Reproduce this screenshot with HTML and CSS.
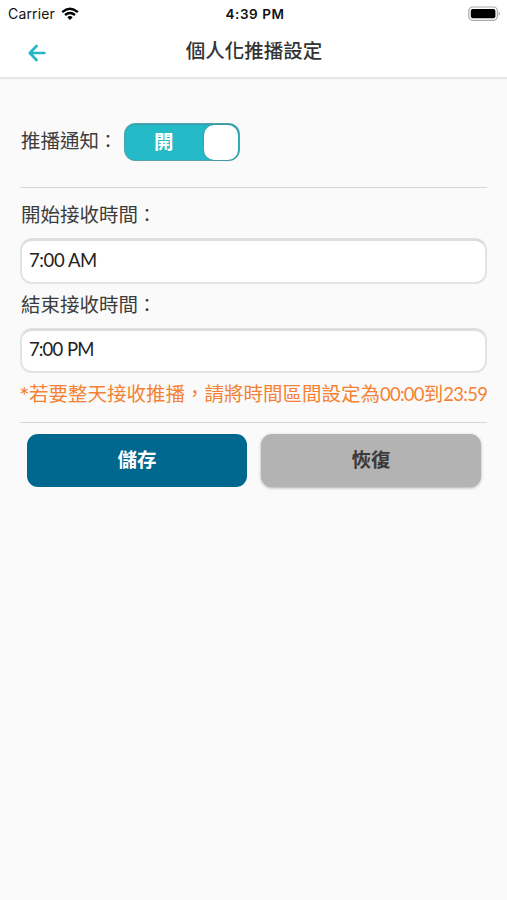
FILE: index.html
```html
<!DOCTYPE html>
<html lang="zh-Hant">
<head>
<meta charset="utf-8">
<title>個人化推播設定</title>
<link rel="stylesheet" href="styles.css">
</head>
<body>
<header class="header">
  <div class="status">
    <div class="carrier"><span>Carrier</span>
      <svg class="wifi" width="18" height="14" viewBox="0 0 18 14" fill="none" stroke="#000" stroke-width="2.3"><path d="M1.2 5.1Q9-1.5 16.8 5.1M4 8Q9 3.9 14 8"/><path d="M6.3 10.2Q9 8 11.7 10.2L9 13Z" fill="#000" stroke="none"/></svg>
    </div>
    <div class="clock">4:39 PM</div>
    <svg class="battery" width="33" height="16" viewBox="0 0 33 16"><rect x=".8" y="1" width="28.6" height="13.3" rx="4" fill="#fff" stroke="#aaa" stroke-width="1.2"/><rect x="2.8" y="3" width="24.6" height="9.3" rx="2" fill="#000"/><path d="M30.7 5.5Q33 7.7 30.7 9.9Z" fill="#999"/></svg>
  </div>
  <div class="nav">
    <svg class="back" width="18" height="18" viewBox="0 0 18 18" fill="none" stroke="#27b7c4" stroke-width="2.7" stroke-linecap="round" stroke-linejoin="round"><path d="M8.5 2L1.8 9l6.7 7M2 9h14.4"/></svg>
    <h1 class="title">個人化推播設定</h1>
  </div>
</header>
<main class="content">
  <div class="push"><span class="label">推播通知<span class="colon">：</span></span><div class="toggle"><span class="toggle-text">開</span><span class="knob"></span></div></div>
  <section class="times">
    <div class="label">開始接收時間<span class="colon">：</span></div>
    <div class="field">7:00 AM</div>
    <div class="label">結束接收時間<span class="colon">：</span></div>
    <div class="field end">7:00 PM</div>
    <div class="note"><span class="star">*</span>若要整天接收推播，請將時間區間設定為<span class="num">00:00</span>到<span class="num">23:59</span></div>
  </section>
  <div class="actions"><div class="btn save">儲存</div><div class="btn restore">恢復</div></div>
</main>
</body>
</html>
```
FILE: styles.css
```css
* { box-sizing: border-box; }
body { margin: 0; min-height: 900px; background: #fafafa; color: #3c3c3c; font-family: "Noto Sans CJK TC", sans-serif; font-size: 19.5px; }
.header { height: 77px; background: #fff; box-shadow: 0 2px 1px #e5e5e5; }
.status { height: 27px; display: grid; grid-template-columns: 1fr auto 1fr; align-items: center; padding: 0 6px 0 8px; color: #111; font-family: Inter, sans-serif; font-size: 14px; }
.carrier { display: flex; align-items: center; gap: 6px; letter-spacing: .15px; }
.clock { font-weight: 600; font-size: 13.5px; letter-spacing: .55px; padding-left: 1px; }
.battery { justify-self: end; }
.nav { height: 50px; display: grid; grid-template-columns: 60px 1fr 60px; align-items: center; }
.back { margin: 2px 0 0 28px; }
.title { margin: -4px 0 0 1px; text-align: center; font-size: 19.5px; font-weight: 500; line-height: 30px; color: #333; }
.content { padding: 46px 20px 0; }
.push { height: 65px; display: flex; align-items: flex-start; border-bottom: 1.5px solid #d5d5d5; padding-left: 1px; }
.push .label { margin: 2px 0 0; width: 103px; padding: 0; }
.label { height: 30px; line-height: 30px; padding-left: 1px; white-space: nowrap; }
.colon { font-size: 18px; }
.toggle { width: 116px; height: 38px; border-radius: 11px; background: #25bac7; border: 1px solid #52a5ad; box-shadow: inset 0 1px 1px #3b9ea9; display: flex; align-items: center; justify-content: space-between; padding: 0 1px 0 29px; }
.toggle-text { color: #fff; font-weight: 700; font-size: 19.5px; line-height: 34px; margin-top: -2px; }
.knob { width: 34px; height: 35px; border-radius: 10px; background: #fff; box-shadow: 0 0 2px #397f86; }
.times { padding-top: 11px; height: 235px; border-bottom: 1.5px solid #d5d5d5; }
.field { height: 46px; margin: 9px 0 5px; border: 2px solid #e3e3e3; border-top: 3px solid #dedede; border-radius: 12px; background: #fff; padding-left: 7px; line-height: 39px; font-family: Lato, sans-serif; font-size: 18.5px; font-weight: 400; color: #222; letter-spacing: -.4px; }
.end { height: 45px; line-height: 37px; letter-spacing: -.9px; word-spacing: 1px; }
.times .label { margin: 0; }
.note { height: 30px; line-height: 30px; color: #f58233; white-space: nowrap; }
.num { font-family: Lato, sans-serif; font-size: 18.5px; letter-spacing: -.75px; }
.star { font-family: Lato, sans-serif; font-size: 25px; line-height: 20px; vertical-align: -5px; display: inline-block; width: 9px; margin-left: -1px; margin-right: 1px; }
.actions { display: grid; grid-template-columns: 1fr 1fr; gap: 14px; padding: 11px 6px 0 7px; }
.btn { height: 53px; border-radius: 11px; text-align: center; line-height: 50px; font-weight: 700; }
.save { background: #00688f; color: #fff; }
.restore { background: #b3b3b3; color: #3a3a3a; box-shadow: 0 1px 3px #aaa; }
```
